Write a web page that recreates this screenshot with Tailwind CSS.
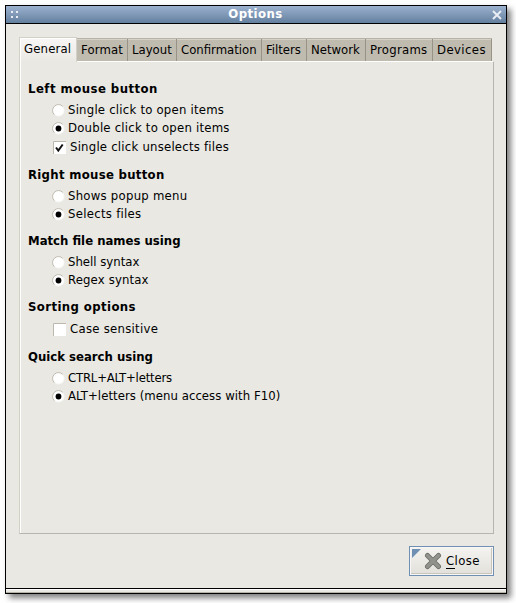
<!DOCTYPE html>
<html lang="en">
<head>
<meta charset="utf-8">
<title>Options</title>
<script src="https://cdn.jsdelivr.net/npm/@tailwindcss/browser@4"></script>
</head>
<body class="bg-white w-[516px] h-[603px] overflow-hidden pl-[5px] pt-[5px] font-['DejaVu_Sans_Condensed','DejaVu_Sans',sans-serif] text-[13px] leading-[18px] text-black">
<svg class="hidden">
  <defs>
    <g id="radio">
      <circle cx="6.5" cy="6.5" r="6" fill="#f8f7f5"/>
      <path d="M2.3 10.7A5.9 5.9 0 0 1 10.7 2.3" fill="none" stroke="#bfbbb0" stroke-width="1"/>
      <circle cx="6.5" cy="6.5" r="5" fill="#fff"/>
    </g>
    <g id="box">
      <path d="M0 0H13V13H0Z" fill="#fff"/>
      <path d="M.5 13V.5H13" fill="none" stroke="#bcb8ad"/>
    </g>
  </defs>
</svg>
<div class="w-[502px] h-[589px] border border-black bg-[#e9e8e3] flex flex-col shadow-[4px_4px_6px_rgba(0,0,0,0.5)]">
  <div class="h-[18px] shrink-0 border-b border-black bg-linear-to-b from-[#9cb2cf] to-[#64809f] flex items-center justify-between pl-[5px] pr-[4px]">
    <svg class="w-[8px] h-[8px] mb-px" viewBox="0 0 8 8" fill="#e9edf3"><path d="M0 1h2v2H0zM5 1h2v2H5zM0 6h2v2H0zM5 6h2v2H5z"/></svg>
    <span class="text-white font-bold leading-[16px] pb-px tracking-[0.45px]">Options</span>
    <svg class="w-[10px] h-[10px]" viewBox="0 0 10 10"><path d="M1 1L9 9M9 1L1 9" stroke="#e9edf3" stroke-width="2"/></svg>
  </div>
  <div class="h-[565px] shrink-0 border-b border-black flex flex-col pt-[13px] pl-[13px] pr-[12px]">
    <div class="flex h-[24px] items-end relative z-10 whitespace-nowrap">
      <div class="w-[58px] h-[25px] -mb-px border-t border-l border-r border-[#d3d0c8] bg-linear-to-b from-[#f8f7f5] to-[#e9e8e3] shadow-[inset_1px_1px_#fff] pl-[4px] pt-[2px] tracking-[0.15px]">General</div>
      <div class="flex h-[23px] border-t border-[#b7b2a6] bg-[#c0bbaf] shadow-[inset_0_1px_#d5d2c9] leading-[21px]">
        <div class="w-[51px] border-r border-[#989386] pl-[4px] tracking-[0.15px]">Format</div>
        <div class="w-[49px] border-r border-[#989386] pl-[4px]">Layout</div>
        <div class="w-[85px] border-r border-[#989386] pl-[4px]">Confirmation</div>
        <div class="w-[45px] border-r border-[#989386] pl-[4px]">Filters</div>
        <div class="w-[59px] border-r border-[#989386] pl-[4px]">Network</div>
        <div class="w-[67px] border-r border-[#989386] pl-[4px] tracking-[0.25px]">Programs</div>
        <div class="w-[59px] border-r border-[#989386] pl-[4px] tracking-[0.4px]">Devices</div>
      </div>
    </div>
    <div class="w-[475px] h-[473px] border-t-white border-l-[#d3d0c8] border-r-[#b7b5af] border-b-[#b7b5af] border shadow-[inset_1px_0_#fff] pl-[8px] pt-[18px]">
      <section class="h-[86px]">
        <h2 class="font-bold mb-[3px] tracking-[0.47px]">Left mouse button</h2>
        <div class="flex items-center pl-[24px] gap-[3px] tracking-[0.22px]"><svg class="size-[13px]" viewBox="0 0 13 13"><use href="#radio"/></svg>Single click to open items</div>
        <div class="flex items-center pl-[24px] gap-[3px] tracking-[0.22px]"><svg class="size-[13px]" viewBox="0 0 13 13"><use href="#radio"/><circle cx="6.5" cy="6.5" r="2.9"/></svg>Double click to open items</div>
        <div class="flex items-center pl-[25px] gap-[4px] mt-px tracking-[0.22px]"><svg class="size-[13px]" viewBox="0 0 13 13"><use href="#box"/><path d="M3 6.5L5.3 9.5L9.7 3.5" fill="none" stroke="#111" stroke-width="2"/></svg>Single click unselects files</div>
      </section>
      <section class="h-[66px]">
        <h2 class="font-bold mb-[3px] tracking-[0.3px]">Right mouse button</h2>
        <div class="flex items-center pl-[24px] gap-[3px] tracking-[0.25px]"><svg class="size-[13px]" viewBox="0 0 13 13"><use href="#radio"/></svg>Shows popup menu</div>
        <div class="flex items-center pl-[24px] gap-[3px] tracking-[0.28px]"><svg class="size-[13px]" viewBox="0 0 13 13"><use href="#radio"/><circle cx="6.5" cy="6.5" r="2.9"/></svg>Selects files</div>
      </section>
      <section class="h-[66px]">
        <h2 class="font-bold mb-[3px]">Match file names using</h2>
        <div class="flex items-center pl-[24px] gap-[3px]"><svg class="size-[13px]" viewBox="0 0 13 13"><use href="#radio"/></svg>Shell syntax</div>
        <div class="flex items-center pl-[24px] gap-[3px] tracking-[0.15px]"><svg class="size-[13px]" viewBox="0 0 13 13"><use href="#radio"/><circle cx="6.5" cy="6.5" r="2.9"/></svg>Regex syntax</div>
      </section>
      <section class="h-[50px]">
        <h2 class="font-bold mb-[4px] tracking-[0.4px]">Sorting options</h2>
        <div class="flex items-center pl-[25px] gap-[4px] tracking-[0.27px]"><svg class="size-[13px]" viewBox="0 0 13 13"><use href="#box"/></svg>Case sensitive</div>
      </section>
      <section>
        <h2 class="font-bold mb-[3px]">Quick search using</h2>
        <div class="flex items-center pl-[24px] gap-[3px] tracking-[-0.2px]"><svg class="size-[13px]" viewBox="0 0 13 13"><use href="#radio"/></svg>CTRL+ALT+letters</div>
        <div class="flex items-center pl-[24px] gap-[3px] tracking-[0.05px]"><svg class="size-[13px]" viewBox="0 0 13 13"><use href="#radio"/><circle cx="6.5" cy="6.5" r="2.9"/></svg>ALT+letters (menu access with F10)</div>
      </section>
    </div>
    <div class="self-end mt-[12px] w-[85px] h-[30px] border border-[#6f8fb3] bg-[#f8f7f5] p-px">
      <div class="relative h-full border-r border-b border-[#c9c5bb] bg-linear-to-b from-[#f4f3f0] to-[#e3e1db] flex items-center pl-[13px] gap-[4px]">
        <svg class="absolute left-px top-px size-[9px]" viewBox="0 0 9 9"><path d="M0 0H9L0 9Z" fill="#6f8fb3"/></svg>
        <svg class="size-[18px] shrink-0" viewBox="0 0 18 18" fill="none" stroke-linecap="round"><path d="M3.5 3.5L14.5 14.5M14.5 3.5L3.5 14.5" stroke="#6c6c68" stroke-width="5"/><path d="M3.5 3.5L14.5 14.5M14.5 3.5L3.5 14.5" stroke="#92928d" stroke-width="3.4"/></svg>
        <span class="tracking-[0.4px]"><span class="border-b border-black inline-block leading-[14px]">C</span>lose</span>
      </div>
    </div>
  </div>
  <div class="h-[4px] border-t border-white border-b border-b-[#b7b2a6] bg-[#e9e8e3]"></div>
</div>
</body>
</html>
